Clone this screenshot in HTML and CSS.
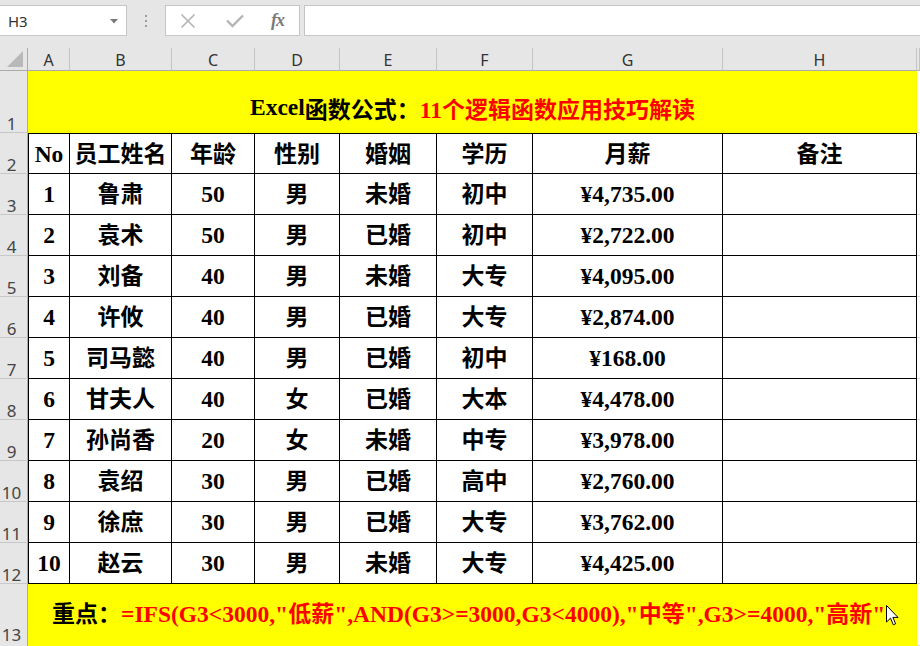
FILE: index.html
```html
<!DOCTYPE html>
<html lang="zh-CN">
<head>
<meta charset="utf-8">
<title>Excel</title>
<link rel="stylesheet" href="styles.css">
</head>
<body>
<div class="app">
  <div class="toolbar">
    <div class="namebox">
      <span class="ref">H3</span>
      <svg class="drop" width="8" height="5" viewBox="0 0 8 5"><path d="M0 0 L8 0 L4 4.5 Z" fill="#7a7a7a"/></svg>
    </div>
    <div class="grip"><i></i><i></i><i></i></div>
    <div class="fxbox">
      <svg width="16" height="16" viewBox="0 0 16 16"><path d="M1.5 1.5 L14.5 14.5 M14.5 1.5 L1.5 14.5" stroke="#b4b4b4" stroke-width="1.6" fill="none"/></svg>
      <svg width="18" height="14" viewBox="0 0 18 14"><path d="M1 6.5 L6.5 12 L17 1.5" stroke="#b4b4b4" stroke-width="2.4" fill="none"/></svg>
      <span class="fx">fx</span>
    </div>
    <div class="formula"></div>
  </div>

  <div class="sheet">
    <div class="corner"><svg width="17" height="16" viewBox="0 0 17 16"><path d="M16 0 L16 16 L0 16 Z" fill="#b9b9b9"/></svg></div>
    <div class="colh">A</div>
    <div class="colh">B</div>
    <div class="colh">C</div>
    <div class="colh">D</div>
    <div class="colh">E</div>
    <div class="colh">F</div>
    <div class="colh">G</div>
    <div class="colh">H</div>
    <div class="colh"></div>

    <div class="rowh">1</div>
    <div class="title">Excel<span class="zh">函数公式：</span><span class="red">11<span class="zh">个逻辑函数应用技巧解读</span></span></div>
    <div class="e"></div>

    <div class="rowh">2</div>
    <div class="d a top">No</div>
    <div class="d top zh">员工姓名</div>
    <div class="d top zh">年龄</div>
    <div class="d top zh">性别</div>
    <div class="d top zh">婚姻</div>
    <div class="d top zh">学历</div>
    <div class="d top zh">月薪</div>
    <div class="d top zh">备注</div>
    <div class="e"></div>

    <div class="rowh">3</div>
    <div class="d a">1</div><div class="d zh">鲁肃</div><div class="d">50</div><div class="d zh">男</div><div class="d zh">未婚</div><div class="d zh">初中</div><div class="d">¥4,735.00</div><div class="d"></div><div class="e"></div>

    <div class="rowh">4</div>
    <div class="d a">2</div><div class="d zh">袁术</div><div class="d">50</div><div class="d zh">男</div><div class="d zh">已婚</div><div class="d zh">初中</div><div class="d">¥2,722.00</div><div class="d"></div><div class="e"></div>

    <div class="rowh">5</div>
    <div class="d a">3</div><div class="d zh">刘备</div><div class="d">40</div><div class="d zh">男</div><div class="d zh">未婚</div><div class="d zh">大专</div><div class="d">¥4,095.00</div><div class="d"></div><div class="e"></div>

    <div class="rowh">6</div>
    <div class="d a">4</div><div class="d zh">许攸</div><div class="d">40</div><div class="d zh">男</div><div class="d zh">已婚</div><div class="d zh">大专</div><div class="d">¥2,874.00</div><div class="d"></div><div class="e"></div>

    <div class="rowh">7</div>
    <div class="d a">5</div><div class="d zh">司马懿</div><div class="d">40</div><div class="d zh">男</div><div class="d zh">已婚</div><div class="d zh">初中</div><div class="d">¥168.00</div><div class="d"></div><div class="e"></div>

    <div class="rowh">8</div>
    <div class="d a">6</div><div class="d zh">甘夫人</div><div class="d">40</div><div class="d zh">女</div><div class="d zh">已婚</div><div class="d zh">大本</div><div class="d">¥4,478.00</div><div class="d"></div><div class="e"></div>

    <div class="rowh">9</div>
    <div class="d a">7</div><div class="d zh">孙尚香</div><div class="d">20</div><div class="d zh">女</div><div class="d zh">未婚</div><div class="d zh">中专</div><div class="d">¥3,978.00</div><div class="d"></div><div class="e"></div>

    <div class="rowh">10</div>
    <div class="d a">8</div><div class="d zh">袁绍</div><div class="d">30</div><div class="d zh">男</div><div class="d zh">已婚</div><div class="d zh">高中</div><div class="d">¥2,760.00</div><div class="d"></div><div class="e"></div>

    <div class="rowh">11</div>
    <div class="d a">9</div><div class="d zh">徐庶</div><div class="d">30</div><div class="d zh">男</div><div class="d zh">已婚</div><div class="d zh">大专</div><div class="d">¥3,762.00</div><div class="d"></div><div class="e"></div>

    <div class="rowh">12</div>
    <div class="d a">10</div><div class="d zh">赵云</div><div class="d">30</div><div class="d zh">男</div><div class="d zh">未婚</div><div class="d zh">大专</div><div class="d">¥4,425.00</div><div class="d"></div><div class="e"></div>

    <div class="rowh last">13</div>
    <div class="note"><span class="zh">重点：</span><span class="red">=IFS(G3&lt;3000,"<span class="zh">低薪</span>",AND(G3&gt;=3000,G3&lt;4000),"<span class="zh">中等</span>",G3&gt;=4000,"<span class="zh">高新</span>"</span>
      <svg class="cursor" width="13" height="21" viewBox="0 0 13 21"><path d="M0.5 0.5 L0.5 17 L4.5 13.2 L7.3 19.8 L9.6 18.8 L6.9 12.4 L12 12.4 Z" fill="#fff" stroke="#000" stroke-width="1" stroke-linejoin="round"/></svg>
    </div>
    <div class="e"></div>
  </div>
</div>
</body>
</html>
```

FILE: styles.css
```css
* { box-sizing: border-box; }
html, body { margin: 0; padding: 0; }
body { background: #e6e6e6; width: 920px; height: 646px; overflow: hidden; }

.app { width: 920px; height: 646px; overflow: hidden; }

.toolbar {
  height: 48px;
  display: flex;
  align-items: flex-start;
  padding-top: 5px;
}
.namebox {
  width: 127px;
  height: 31px;
  background: #fff;
  border: 1px solid #c6c6c6;
  border-left: none;
  display: flex;
  align-items: center;
  justify-content: space-between;
  padding: 0 8px 0 8px;
  font: 15px "Noto Sans", "Liberation Sans", sans-serif;
  color: #333;
}
.drop { margin-top: 1px; }
.grip {
  width: 38px;
  height: 31px;
  display: flex;
  flex-direction: column;
  align-items: center;
  justify-content: center;
  gap: 3px;
}
.grip i {
  display: block;
  width: 2px;
  height: 2px;
  background: #9c9c9c;
}
.fxbox {
  width: 135px;
  height: 31px;
  background: #fff;
  border: 1px solid #c6c6c6;
  display: flex;
  align-items: center;
  padding-left: 14px;
  gap: 0;
}
.fxbox svg:first-child { margin-right: 30px; }
.fxbox svg:nth-child(2) { margin-right: 27px; margin-top: 1px; }
.fx {
  font: italic bold 18px "Liberation Serif", serif;
  color: #7a7a7a;
  letter-spacing: -1px;
}
.formula {
  flex: 1;
  height: 31px;
  margin-left: 4px;
  margin-right: -2px;
  background: #fff;
  border: 1px solid #c6c6c6;
}

.sheet {
  display: grid;
  grid-template-columns: 28px 42px 102px 83px 85px 97px 96px 190px 194px 1fr;
  grid-template-rows: 23px 62px repeat(11, 41px) 62px;
  background: #fff;
}
.corner {
  background: #e6e6e6;
  border-right: 1px solid #ababab;
  border-bottom: 1px solid #ababab;
  display: flex;
  align-items: flex-end;
  justify-content: flex-end;
  padding: 0 3px 3px 0;
}
.colh {
  background: #e6e6e6;
  border-right: 1px solid #c4c4c4;
  border-bottom: 1px solid #ababab;
  text-align: center;
  font: 16px "Noto Sans", "Liberation Sans", sans-serif;
  color: #333;
  line-height: 23px;
  padding-top: 1px;
}
.rowh {
  background: #e6e6e6;
  border-right: 1px solid #ababab;
  border-bottom: 1px solid #c8c8c8;
  display: flex;
  align-items: flex-end;
  justify-content: center;
  padding-right: 4px;
  font: 17px "Noto Sans", "Liberation Sans", sans-serif;
  color: #444;
  line-height: 17px;
}
.rowh.last { padding-bottom: 3px; border-bottom: none; }
.e {
  background: #fff;
  border-bottom: 1px solid #dadada;
}

.d {
  background: #fff;
  border-right: 1px solid #000;
  border-bottom: 1px solid #000;
  display: flex;
  align-items: center;
  justify-content: center;
  font: bold 23.5px "Liberation Serif", "Noto Sans CJK SC", serif;
  color: #000;
  padding-top: 1px;
  white-space: nowrap;
}
.d.zh { padding-top: 0; padding-bottom: 4px; }
.d.a { border-left: 1px solid #000; }
.d.top { border-top: 1px solid #000; }

.zh { font-family: "Noto Sans CJK SC", sans-serif; font-size: 23px; }
.red { color: #ff0000; }

.title {
  grid-column: 2 / span 8;
  background: #ffff00;
  display: flex;
  align-items: center;
  justify-content: center;
  padding-top: 11px;
  font: bold 23.5px "Liberation Serif", "Noto Sans CJK SC", serif;
  color: #000;
  white-space: nowrap;
}
.note {
  grid-column: 2 / span 8;
  background: #ffff00;
  display: flex;
  align-items: center;
  padding-left: 24px;
  padding-bottom: 6px;
  font: bold 23.5px "Liberation Serif", "Noto Sans CJK SC", serif;
  color: #000;
  white-space: nowrap;
  position: relative;
}
.cursor {
  position: absolute;
  left: 858px;
  top: 21px;
}
```
